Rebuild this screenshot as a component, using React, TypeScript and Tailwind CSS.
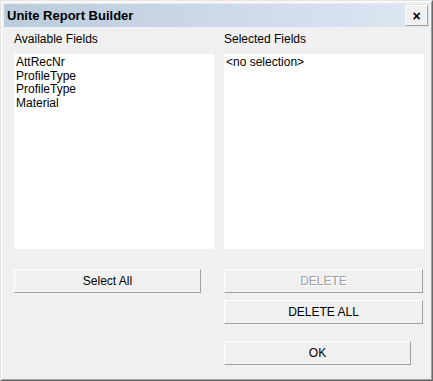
const FONT = "font-['Liberation_Sans',Arial,sans-serif]";

const AVAILABLE = ['AttRecNr', 'ProfileType', 'ProfileType', 'Material'];

function WinButton({
  label,
  className = '',
  disabled = false,
}: {
  label: string;
  className?: string;
  disabled?: boolean;
}) {
  return (
    <button
      type="button"
      className={`flex h-[24px] items-center justify-center border border-t-white border-l-white border-r-[#a0a0a0] border-b-[#a0a0a0] bg-[#f0f0f0] text-[12px] ${
        disabled ? 'text-[#a0a0a0] [text-shadow:1px_1px_0_#fff]' : 'text-black'
      } ${className}`}
    >
      {label}
    </button>
  );
}

function ListBox({ items }: { items: string[] }) {
  return (
    <div className="h-[195px] w-[200px] bg-white px-[2px] pt-[2px] text-[12px] leading-[13.7px] text-black">
      {items.map((item, i) => (
        <div key={i}>{item}</div>
      ))}
    </div>
  );
}

export default function App() {
  return (
    <div className={`h-[381px] w-[433px] ${FONT}`}>
      <div className="h-full w-full border border-t-[#e3e3e3] border-l-[#e3e3e3] border-r-[#696969] border-b-[#696969]">
        <div className="flex h-full w-full flex-col border border-t-white border-l-white border-r-[#a0a0a0] border-b-[#a0a0a0] bg-[#f0f0f0] p-[2px]">
          {/* title bar */}
          <div className="flex h-[23px] items-start justify-between bg-gradient-to-r from-[#bccbdb] to-[#dce7f3]">
            <span className="pl-[3px] pt-[4px] text-[13px] font-bold leading-[15px] text-black">
              Unite Report Builder
            </span>
            <button
              type="button"
              className="mr-[1px] mt-[1px] flex h-[21px] w-[23px] items-center justify-center border border-t-white border-l-white border-r-[#a0a0a0] border-b-[#a0a0a0] bg-[#f0f0f0] text-[14px] font-bold leading-none text-black"
            >
              ×
            </button>
          </div>

          {/* body */}
          <div className="flex gap-[10px] px-[10px] pt-[5px]">
            <div className="flex w-[200px] flex-col">
              <div className="h-[14px] text-[12px] leading-[14px] text-black">Available Fields</div>
              <div className="mt-[8px]">
                <ListBox items={AVAILABLE} />
              </div>
              <WinButton label="Select All" className="mt-[20px] w-[187px]" />
            </div>
            <div className="flex w-[200px] flex-col">
              <div className="h-[14px] text-[12px] leading-[14px] text-black">Selected Fields</div>
              <div className="mt-[8px]">
                <ListBox items={['<no selection>']} />
              </div>
              <WinButton label="DELETE" disabled className="mt-[20px] w-[199px]" />
              <WinButton label="DELETE ALL" className="mt-[7px] w-[199px]" />
              <WinButton label="OK" className="mt-[17px] w-[187px]" />
            </div>
          </div>
        </div>
      </div>
    </div>
  );
}
